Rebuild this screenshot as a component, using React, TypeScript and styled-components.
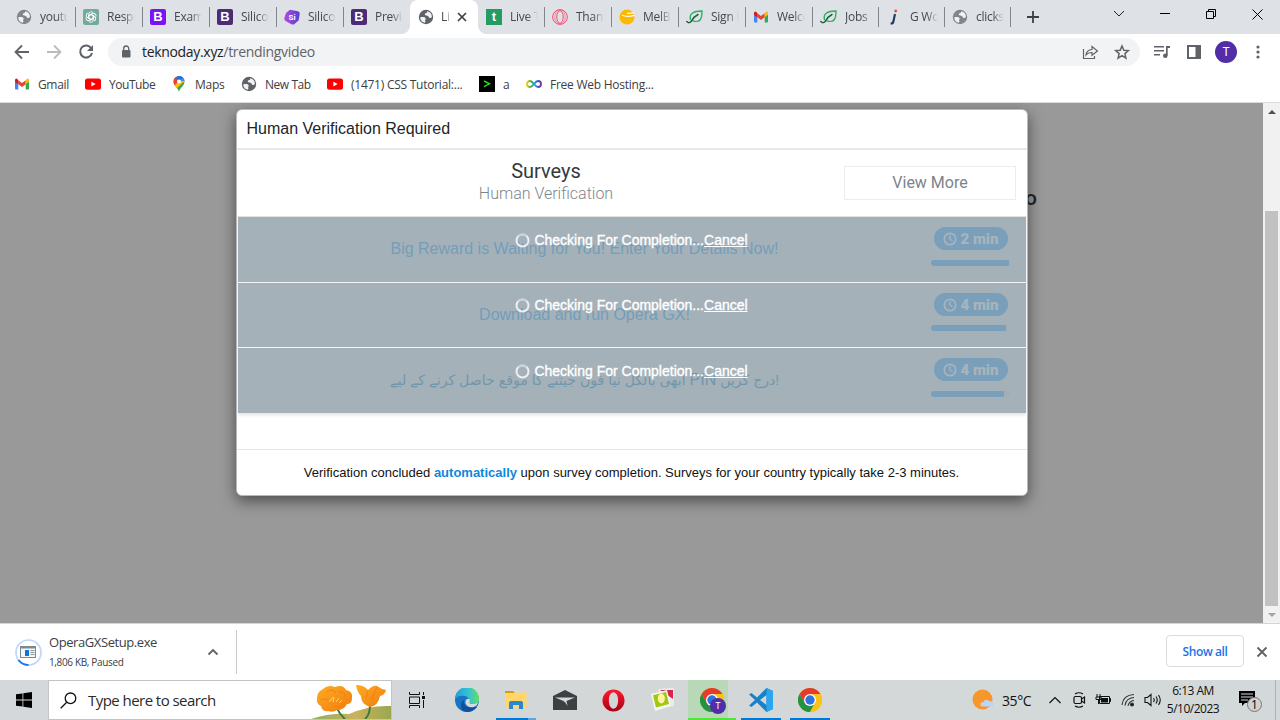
import React from "react";
import styled, { createGlobalStyle, css } from "styled-components";

const Global = createGlobalStyle`
  * { box-sizing: border-box; }
  html, body { margin: 0; padding: 0; overflow: hidden; }
  body { font-family: "Open Sans", "Noto Sans", sans-serif; font-size: 12px; color: #3c4043; }
  svg { display: block; flex: none; }
`;

const Screen = styled.div`
  width: 1280px;
  height: 720px;
  display: flex;
  flex-direction: column;
  background: #fff;
  overflow: hidden;
`;

/* ---------- tab strip ---------- */
const TabStrip = styled.div`
  height: 34px;
  flex: none;
  display: flex;
  background: #dee1e6;
  padding-left: 8px;
`;
const Tab = styled.div<{ $w: number; $active?: boolean; $line?: boolean }>`
  width: ${(p) => p.$w}px;
  flex: none;
  height: 34px;
  display: flex;
  align-items: center;
  padding-left: 8px;
  gap: 8px;
  position: relative;
  ${(p) =>
    p.$line &&
    css`
      &::after {
        content: "";
        position: absolute;
        right: -1px;
        top: 7px;
        width: 1px;
        height: 20px;
        background: #80868b;
      }
    `}
  ${(p) =>
    p.$active &&
    css`
      background: #fff;
      border-radius: 8px 8px 0 0;
      z-index: 1;
      gap: 7px;
      &::before,
      &::after {
        content: "";
        position: absolute;
        bottom: 0;
        width: 8px;
        height: 8px;
      }
      &::before {
        left: -8px;
        background: radial-gradient(circle at 0 0, transparent 7.5px, #fff 8px);
      }
      &::after {
        right: -8px;
        background: radial-gradient(circle at 100% 0, transparent 7.5px, #fff 8px);
      }
    `}
`;
const TabTitle = styled.span<{ $w?: number }>`
  width: ${(p) => p.$w ?? 28}px;
  overflow: hidden;
  white-space: nowrap;
  font-size: 12px;
  letter-spacing: -0.25px;
  line-height: 18px;
  color: #45494d;
  mask-image: linear-gradient(to right, #000 60%, transparent 100%);
`;
const WindowButtons = styled.div`
  flex: 1;
  height: 28px;
  display: flex;
  justify-content: flex-end;
  color: #111;
`;
const WindowButton = styled.div`
  width: 46px;
  display: flex;
  align-items: center;
  justify-content: center;
`;
const NewTab = styled.div`
  width: 46px;
  height: 34px;
  display: flex;
  align-items: center;
  justify-content: center;
`;

/* ---------- toolbar ---------- */
const Toolbar = styled.div`
  height: 36px;
  flex: none;
  display: flex;
  align-items: center;
  padding-left: 12px;
`;
const NavButtons = styled.div`
  width: 96px;
  flex: none;
  display: flex;
  align-items: center;
  gap: 12px;
`;
const Omnibox = styled.div`
  width: 1032px;
  flex: none;
  height: 28px;
  border-radius: 14px;
  background: #f1f3f4;
  display: flex;
  align-items: center;
  padding: 0 8px 0 10px;
  gap: 8px;
`;
const Url = styled.span`
  flex: 1;
  font-size: 14px;
  letter-spacing: -0.32px;
  color: #5f6368;
  line-height: 20px;
  b { font-weight: 400; color: #202124; }
`;
const OmniActions = styled.div`
  display: flex;
  gap: 12px;
`;
const ToolActions = styled.div`
  display: flex;
  align-items: center;
  padding-left: 12px;
`;
const Slot = styled.div<{ $w: number }>`
  width: ${(p) => p.$w}px;
  flex: none;
  display: flex;
  justify-content: center;
`;
const Avatar = styled.div<{ $size: number }>`
  width: ${(p) => p.$size}px;
  height: ${(p) => p.$size}px;
  flex: none;
  border-radius: 50%;
  background: #512da8;
  color: #fff;
  font-family: Roboto, sans-serif;
  font-size: ${(p) => Math.round(p.$size * 0.56)}px;
  display: flex;
  align-items: center;
  justify-content: center;
`;
const Bookmarks = styled.div`
  height: 33px;
  flex: none;
  display: flex;
  align-items: flex-start;
  padding: 4px 0 0 14px;
  border-bottom: 1px solid #dadce0;
`;
const Bookmark = styled.div<{ $w: number; $ls?: number }>`
  width: ${(p) => p.$w}px;
  height: 20px;
  flex: none;
  display: flex;
  align-items: center;
  gap: 8px;
  white-space: nowrap;
  letter-spacing: ${(p) => p.$ls ?? -0.25}px;
`;

/* ---------- page ---------- */
const Viewport = styled.div`
  height: 521px;
  flex: none;
  display: flex;
  border-bottom: 1px solid #d5d5d5;
`;
const Page = styled.div`
  width: 1263px;
  background: #999;
  padding: 6px 0 0 236px;
  position: relative;
  overflow: hidden;
`;
const HeadingBehind = styled.div`
  position: absolute;
  left: 1025px;
  top: 80px;
  font: 500 21px/30px Roboto, sans-serif;
  color: #212529;
`;
const Modal = styled.div`
  position: relative;
  width: 792px;
  height: 387px;
  border: 1px solid #b9b9b9;
  border-radius: 6px;
  background: #fff;
  box-shadow: 0 5px 15px rgba(0, 0, 0, 0.5);
  display: flex;
  flex-direction: column;
  overflow: hidden;
`;
const ModalTitle = styled.div`
  height: 40px;
  flex: none;
  padding: 0 9.5px;
  font: 16px/38px "Liberation Sans", Arial, sans-serif;
  color: #212529;
  border-bottom: 2px solid #e9e9e9;
`;
const SurveyHead = styled.div`
  height: 67px;
  flex: none;
  display: flex;
  padding: 10px 10px 0 11px;
  border-bottom: 1px solid #e4e4e4;
  font-family: Roboto, sans-serif;
`;
const HeadText = styled.div`
  width: 596px;
  text-align: center;
`;
const Surveys = styled.div`
  font-size: 20px;
  line-height: 23px;
  color: #343a40;
`;
const Sub = styled.div`
  font-size: 16px;
  font-weight: 300;
  line-height: 21px;
  color: #7d868e;
`;
const ViewMore = styled.div`
  width: 172px;
  height: 34px;
  margin-top: 6px;
  border: 1px solid #ececec;
  text-align: center;
  font-size: 16px;
  line-height: 32px;
  color: #7c848b;
`;
const Rows = styled.div`
  margin: 0 1px;
  height: 196px;
  flex: none;
  box-shadow: 0 2px 4px rgba(0, 0, 0, 0.12);
`;
const Row = styled.div<{ $h: number }>`
  height: ${(p) => p.$h}px;
  display: flex;
  position: relative;
  background: #a5b1b9;
  border-bottom: 1px solid #f2f4f5;
  &:last-child { border-bottom: 0; }
`;
const Offer = styled.div`
  width: 693px;
  text-align: center;
  font: 16px/64px "Liberation Sans", Arial, sans-serif;
  color: #729eb9;
  white-space: nowrap;
`;
const OfferUrdu = styled(Offer)`
  color: #7197ab;
  font-family: "Liberation Sans", "DejaVu Sans", sans-serif;
  font-size: 14.1px;
`;
const Latin = styled.span`
  font-size: 16px;
`;
const Side = styled.div`
  width: 79px;
  padding-top: 10px;
  display: flex;
  flex-direction: column;
  align-items: center;
`;
const Pill = styled.div`
  width: 74px;
  height: 23px;
  flex: none;
  border-radius: 12px;
  background: #7a9fbb;
  display: flex;
  align-items: center;
  justify-content: center;
  gap: 4px;
  font: 900 15px/22px Roboto, sans-serif;
  color: #a8b4bc;
`;
const Track = styled.div<{ $top: number }>`
  width: 79px;
  height: 6px;
  flex: none;
  margin-top: ${(p) => p.$top}px;
  border-radius: 3px;
  background: #a2adb5;
  overflow: hidden;
`;
const Fill = styled.div<{ $w: number }>`
  width: ${(p) => p.$w}px;
  height: 6px;
  background: #7a9fbb;
`;
const Checking = styled.div<{ $top: number }>`
  position: absolute;
  inset: ${(p) => p.$top}px 1px auto 0;
  display: flex;
  justify-content: center;
  align-items: center;
  gap: 4px;
  font: 14px/18px "Liberation Sans", Arial, sans-serif;
  color: #fff;
  -webkit-text-stroke: 0.35px #fff;
  u { text-underline-offset: 1px; }
`;
const Footer = styled.div`
  height: 46px;
  margin-top: auto;
  border-top: 1px solid #e5e5e5;
  padding-right: 1px;
  text-align: center;
  font: 13px/45px "Liberation Sans", Arial, sans-serif;
  color: #111;
  white-space: nowrap;
  b { color: #0f87dc; }
`;
const Scrollbar = styled.div`
  width: 17px;
  background: #f1f1f1;
  display: flex;
  flex-direction: column;
  align-items: center;
`;
const ScrollArrow = styled.div`
  height: 17px;
  display: flex;
  align-items: center;
`;
const Thumb = styled.div`
  width: 13px;
  height: 395px;
  margin-top: 91px;
  background: #c1c1c1;
`;

/* ---------- downloads ---------- */
const Shelf = styled.div`
  height: 56px;
  flex: none;
  display: flex;
  align-items: center;
  padding: 0 12px 0 15px;
`;
const Download = styled.div`
  width: 222px;
  height: 44px;
  border-right: 1px solid #c8cacd;
  display: flex;
  align-items: center;
`;
const DownloadText = styled.div`
  width: 160px;
  flex: none;
  padding-left: 7px;
`;
const FileName = styled.div`
  font-size: 13px;
  line-height: 19px;
  letter-spacing: -0.42px;
`;
const FileState = styled.div`
  font-size: 10px;
  line-height: 20px;
  letter-spacing: -0.35px;
`;
const ShowAll = styled.div`
  width: 78px;
  height: 32px;
  margin: -2px 12px 0 auto;
  border: 1px solid #dadce0;
  border-radius: 4px;
  text-align: center;
  line-height: 31px;
  font-weight: 600;
  letter-spacing: -0.4px;
  color: #1a73e8;
`;

/* ---------- taskbar ---------- */
const Taskbar = styled.div`
  height: 40px;
  flex: none;
  display: flex;
  background: linear-gradient(to right, #d5d8db, #d4d7d8 50%, #d3d9da);
  color: #111;
`;
const Start = styled.div`
  width: 48px;
  display: flex;
  align-items: center;
  justify-content: center;
`;
const Search = styled.div`
  width: 344px;
  height: 40px;
  border: 1px solid #c4c4c4;
  background: #fff;
  display: flex;
  align-items: center;
  padding-left: 11px;
  gap: 11px;
  font-size: 15px;
  letter-spacing: -0.55px;
  color: #2a2a2a;
  svg:last-child { margin-left: auto; }
`;
const TaskButton = styled.div<{ $bar?: string; $w?: number; $open?: boolean }>`
  width: ${(p) => p.$w ?? 49}px;
  height: 40px;
  display: flex;
  align-items: center;
  justify-content: center;
  position: relative;
  ${(p) =>
    p.$open &&
    css`
      background: linear-gradient(to right, transparent 1px, #b9d8b8 1px, #b9d8b8 41px, transparent 41px);
    `}
  ${(p) =>
    p.$bar &&
    css`
      &::after {
        content: "";
        position: absolute;
        left: ${p.$open ? 1 : 5}px;
        right: ${p.$open ? 0 : 4}px;
        bottom: 0;
        height: 2px;
        background: ${p.$bar};
      }
    `}
`;
const Badge = styled.div`
  position: absolute;
  right: 10px;
  bottom: 6px;
`;
const Tray = styled.div`
  margin-left: auto;
  display: flex;
  align-items: center;
  height: 40px;
`;
const Temp = styled.span`
  width: 55px;
  flex: none;
  padding-left: 8px;
  font-size: 14px;
  letter-spacing: -0.4px;
`;
const Clock = styled.div`
  width: 68px;
  padding-left: 4px;
  text-align: center;
  line-height: 18px;
  letter-spacing: -0.5px;
  margin-top: -1px;
`;
const ShowDesktop = styled.div`
  width: 5px;
  height: 40px;
  border-left: 1px solid #aeb2b4;
`;

/* ---------- icons ---------- */
const Globe = ({ c = "#5f6368" }: { c?: string }) => (
  <svg width="16" height="16" viewBox="0 0 16 16">
    <circle cx="8" cy="8" r="7.200" fill={c} />
    <path d="M2.200 8.200c2.200-.3 4.800-.5 5.400 1 .5 1.200-.8 1.500-.4 2.500.3.900.1 1.700-.4 2.100A5.900 5.900 0 0 1 2.200 8.200zM9.300 2.200c-.4 1 .1 1.500-1 1.900-1.300.4-1.700.9-1.400 1.700.4 1 2.300.5 3.200 1.300.8.800.5 1.900 1.800 2 .8 0 1.500-.5 2-1.200A5.900 5.900 0 0 0 9.300 2.200z" fill="#f0f2f4" />
  </svg>
);
const GPT = () => (
  <svg width="16" height="16" viewBox="0 0 16 16">
    <rect width="16" height="16" rx="2" fill="#74aa9c" />
    <g fill="none" stroke="#fff" strokeWidth=".9">
      {[0, 60, 120, 180, 240, 300].map((a) => (
        <path key={a} transform={`rotate(${a} 8 8)`} d="M5.800 9.200V5.200A2.500 2.500 0 0 1 10.200 3.600M5.800 6.700L8 5.400l3.300 1.900" />
      ))}
    </g>
  </svg>
);
const LetterIcon = styled.div<{ $bg: string; $r?: number }>`
  width: 16px;
  height: 16px;
  flex: none;
  border-radius: ${(p) => p.$r ?? 2}px;
  background: ${(p) => p.$bg};
  color: #fff;
  font: 700 13px/16px "Liberation Sans", sans-serif;
  text-align: center;
`;
const Silicon = () => (
  <svg width="16" height="16" viewBox="0 0 16 16">
    <defs>
      <linearGradient id="si" x1="0" x2="1">
        <stop offset="0" stopColor="#b04be0" />
        <stop offset="1" stopColor="#5a3fd0" />
      </linearGradient>
    </defs>
    <path d="M6 .8l8 1.400q2 .5 1.700 2.500l-1 6.500-4.500 4q-1.300.7-2.700 0L1.500 12Q0 11 .3 9L2 4z" fill="url(#si)" />
    <text x="8" y="11" fontSize="8" fontWeight="700" fill="#fff" textAnchor="middle" fontFamily="Roboto">Si</text>
  </svg>
);
const Opera = ({ s = 16, pink }: { s?: number; pink?: boolean }) =>
  pink ? (
    <svg width={s} height={s} viewBox="0 0 16 16" fill="none" stroke="#fa4d76">
      <circle cx="8" cy="8" r="7.400" />
      <ellipse cx="8" cy="8" rx="3.200" ry="6.300" />
      <ellipse cx="8" cy="8" rx="5.200" ry="7" strokeWidth=".6" />
    </svg>
  ) : (
    <svg width={s} height={s} viewBox="0 0 24 24">
      <defs>
        <linearGradient id="op" x2="0" y2="1">
          <stop offset="0" stopColor="#ff1b2d" />
          <stop offset="1" stopColor="#a70014" />
        </linearGradient>
      </defs>
      <path fillRule="evenodd" fill="url(#op)" d="M12 .5a11.500 11.500 0 1 0 0 23 11.500 11.500 0 0 0 0-23zM12 3.500c3 0 4.800 3.800 4.800 8.500s-1.800 8.500-4.800 8.500-4.800-3.800-4.800-8.500S9 3.500 12 3.500z" />
    </svg>
  );
const Mel = () => (
  <svg width="16" height="16" viewBox="0 0 16 16">
    <circle cx="8" cy="8" r="7.500" fill="#ffb800" />
    <path d="M8 4.200q3 .6 7-.6M3 6.300q5 1.900 12.500.1" stroke="#fff" strokeWidth="1.200" fill="none" />
  </svg>
);
const Leaf = () => (
  <svg width="17" height="16" viewBox="0 0 17 16" fill="none" strokeLinecap="round">
    <path d="M4.500 10.500C3 5 7 2 16 2c-.2 3 .2 6-1.600 8.500-1.500 2.200-5 2.300-7.400 1.300" stroke="#2fae66" strokeWidth="1.400" />
    <path d="M.8 12.500q2.500 2.500 4.800-.5Q8 7.500 12 5.500" stroke="#17633a" strokeWidth="1.500" />
  </svg>
);
const Gmail = () => (
  <svg width="16" height="16" viewBox="0 0 16 16">
    <path d="M1 13V4l3.300 2.500V13.500H2q-1 0-1-1z" fill="#4285f4" />
    <path d="M15 13V4l-3.300 2.500V13.500H14q1 0 1-1z" fill="#34a853" />
    <path d="M4.300 4.200L8 7l3.700-2.800v4L8 11 4.300 8.200z" fill="#ea4335" />
    <path d="M1 4.200Q1 2.500 2.500 2.600L4.300 4v4.200L1 5.800z" fill="#c5221f" />
    <path d="M15 4.200q0-1.700-1.500-1.600L11.700 4v4.200L15 5.800z" fill="#fbbc04" />
  </svg>
);
const JIcon = () => (
  <svg width="16" height="16" viewBox="0 0 16 16">
    <circle cx="9.700" cy="2" r="1.400" fill="#e8483f" />
    <path d="M9 5L7.400 12.500Q7 14.800 4.600 14.500" stroke="#1d3a66" strokeWidth="2.100" fill="none" />
  </svg>
);
const YouTube = () => (
  <svg width="16" height="16" viewBox="0 0 16 16">
    <rect y="2.400" width="16" height="11.400" rx="2.500" fill="#f00" />
    <path d="M6.400 5.700v4.800l4.200-2.400z" fill="#fff" />
  </svg>
);
const MapPin = () => (
  <svg width="16" height="16" viewBox="0 0 16 16">
    <clipPath id="pin"><path d="M8 16C7.400 12 2.500 10 2.500 5.500a5.500 5.500 0 0 1 11 0C13.500 10 8.600 12 8 16z" /></clipPath>
    <g clipPath="url(#pin)">
      <rect width="16" height="16" fill="#34a853" />
      <path d="M0 10L12 0h4v3L4 14z" fill="#fbbc04" />
      <path d="M5 0h11v5L10 5z" fill="#4285f4" />
      <path d="M8 5l6-5H7L4 3z" fill="#1a73e8" />
      <path d="M0 0h3l5 5-5 5-3-2z" fill="#ea4335" />
    </g>
    <circle cx="8" cy="5.500" r="2" fill="#fff" />
  </svg>
);
const Loop = () => (
  <svg width="16" height="16" viewBox="0 0 16 16" fill="none" strokeWidth="1.900">
    <defs>
      <linearGradient id="inf">
        <stop offset="0" stopColor="#f0d000" />
        <stop offset=".3" stopColor="#35a853" />
        <stop offset=".55" stopColor="#2a9be0" />
        <stop offset=".8" stopColor="#3158c8" />
        <stop offset="1" stopColor="#8a2fa0" />
      </linearGradient>
    </defs>
    <path stroke="url(#inf)" d="M8 8C6.500 6 5.500 5 4 5a3 3 0 0 0 0 6c1.500 0 2.500-1 4-3s2.500-3 4-3a3 3 0 0 1 0 6c-1.500 0-2.500-1-4-3z" />
  </svg>
);
const Terminal = () => (
  <svg width="16" height="16" viewBox="0 0 16 16">
    <rect width="16" height="16" fill="#000" />
    <path d="M5 5l5.500 2.800L5 10.600" stroke="#1fe01f" strokeWidth="1.500" fill="none" />
  </svg>
);
const ChromeIcon = () => (
  <svg width="24" height="24" viewBox="0 0 24 24">
    <circle cx="12" cy="12" r="12" fill="#fbc116" />
    <path d="M1.600 6A12 12 0 0 0 12 24l5-9H6.800z" fill="#229342" />
    <path d="M12 6h10.400A12 12 0 0 1 12 24l5.200-9z" fill="#fbc116" />
    <path d="M1.600 6L6.800 15 12 12V6h10.400A12 12 0 0 0 1.600 6z" fill="#e33b2e" />
    <circle cx="12" cy="12" r="6" fill="#fff" />
    <circle cx="12" cy="12" r="4.700" fill="#2f73e0" />
  </svg>
);
const Flowers = () => (
  <svg width="80" height="38" viewBox="2 0 80 38">
    <defs>
      <linearGradient id="hill"><stop offset="0" stopColor="#8fae63" /><stop offset=".55" stopColor="#c9b25e" /><stop offset="1" stopColor="#9aa84f" /></linearGradient>
      <linearGradient id="petal" x2="1" y2="1"><stop offset="0" stopColor="#ffab24" /><stop offset="1" stopColor="#f07c0b" /></linearGradient>
    </defs>
    <path d="M2 38Q20 32 40 33 60 24 82 25V38z" fill="url(#hill)" />
    <path d="M28 27q3 7 8 11M61 24q0 10-5 14" stroke="#3e7b42" strokeWidth="2" fill="none" />
    <path d="M14 8Q19 3 26 6q8-3 11 3 7 1 6 8 0 6-5 6-3 6-10 6-4 3-9 1-6 1-7-5-5-2-4-8 0-6 6-9z" fill="url(#petal)" />
    <g fill="none" stroke="#e87508" strokeOpacity=".55">
      <path d="M17 11q7-4 10 1M29 11q7-1 7 5M11 19q5-3 10 2M25 25q6 3 11-3" />
      <path d="M58 9q-3 7 2 15M68 7q-6 6-7 17" />
    </g>
    <path d="M20 21l4-5M24 21l1-5M27 21l3-4M30 22l3-3" stroke="#ffd95f" fill="none" />
    <path d="M47 4q8 0 12 5 5-5 9-4 4 3 9 4-1 5-6 6-2 10-10 11-9-3-9-11-4-4-5-11z" fill="url(#petal)" />
    <path d="M59 9l-2 8M68 6l-6 13" stroke="#e56d05" strokeOpacity=".5" fill="none" />
  </svg>
);

const tabs: { icon: React.ReactNode; text: string; w: number; active?: boolean; line?: boolean }[] = [
  { icon: <Globe c="#80868b" />, text: "youtube", w: 67, line: true },
  { icon: <GPT />, text: "Respo", w: 67, line: true },
  { icon: <LetterIcon $bg="#7a12f8">B</LetterIcon>, text: "Exam", w: 67, line: true },
  { icon: <LetterIcon $bg="#4c2d73">B</LetterIcon>, text: "Silico", w: 67, line: true },
  { icon: <Silicon />, text: "Silico", w: 67, line: true },
  { icon: <LetterIcon $bg="#4c2d73">B</LetterIcon>, text: "Previe", w: 67 },
  { icon: <Globe />, text: "Li", w: 68, active: true },
  { icon: <LetterIcon $bg="#249b63" $r={0}>t</LetterIcon>, text: "Live T", w: 66, line: true },
  { icon: <Opera pink />, text: "Thank", w: 67, line: true },
  { icon: <Mel />, text: "MelB", w: 67, line: true },
  { icon: <Leaf />, text: "Sign U", w: 67, line: true },
  { icon: <Gmail />, text: "Welco", w: 67, line: true },
  { icon: <Leaf />, text: "Jobs", w: 66, line: true },
  { icon: <JIcon />, text: "G Wo", w: 66, line: true },
  { icon: <Globe c="#80868b" />, text: "clicks", w: 66, line: true },
];

const bookmarks: { icon: React.ReactNode; text: string; w: number; ls?: number }[] = [
  { icon: <Gmail />, text: "Gmail", w: 71, ls: -0.35 },
  { icon: <YouTube />, text: "YouTube", w: 86, ls: -0.45 },
  { icon: <MapPin />, text: "Maps", w: 70 },
  { icon: <Globe />, text: "New Tab", w: 86, ls: -0.45 },
  { icon: <YouTube />, text: "(1471) CSS Tutorial:...", w: 152 },
  { icon: <Terminal />, text: "a", w: 47 },
  { icon: <Loop />, text: "Free Web Hosting...", w: 150 },
];

const Spinner = () => (
  <svg width="15" height="15" viewBox="0 0 15 15" fill="none" strokeWidth="2">
    <circle cx="7.500" cy="7.500" r="6" stroke="#edf0f2" />
    <path d="M3.300 3.300a6 6 0 0 1 8.400 0" stroke="#c9d1d6" />
  </svg>
);
const ClockIcon = () => (
  <svg width="14" height="14" viewBox="0 0 14 14" fill="none" stroke="#a8b4bc" strokeWidth="1.700">
    <circle cx="7" cy="7" r="5.700" />
    <path d="M7 3.300V7l2.500 2" strokeWidth="1.400" />
  </svg>
);

const rows = [
  { id: "reward", text: "Big Reward is Waiting for You! Enter Your Details Now!", min: "2 min", fill: 78, h: 66, top: 10, check: 14 },
  { id: "opera", text: "Download and run Opera GX!", min: "4 min", fill: 75, h: 65, top: 9, check: 13 },
  {
    id: "pin",
    text: <>ابھی بالکل نیا فون جیتنے کا موقع حاصل کرنے کے لیے <Latin>PIN</Latin> درج کریں!</>,
    min: "4 min", fill: 73, h: 65, top: 10, check: 14, urdu: true,
  },
];

export default function App() {
  return (
    <Screen>
      <Global />
      <TabStrip>
        {tabs.map((t, i) => (
          <Tab key={i} $w={t.w} $active={t.active} $line={t.line}>
            {t.icon}
            <TabTitle $w={t.active ? 9 : 28}>{t.text}</TabTitle>
            {t.active && (
              <svg width="10" height="10" viewBox="0 0 10 10" stroke="#3c4043" strokeWidth="1.700"><path d="M1 1l8 8M9 1L1 9" /></svg>
            )}
          </Tab>
        ))}
        <NewTab>
          <svg width="12" height="12" viewBox="0 0 12 12" stroke="#3c4043" strokeWidth="1.800"><path d="M6 0v12M0 6h12" /></svg>
        </NewTab>
        <WindowButtons>
          <WindowButton><svg width="12" height="8" viewBox="0 0 12 8" fill="none" stroke="#222"><path d="M1 1l5 5 5-5" /></svg></WindowButton>
          <WindowButton><svg width="10" height="2"><rect width="10" height="1" fill="#000" /></svg></WindowButton>
          <WindowButton><svg width="10" height="10" viewBox="0 0 10 10" fill="none" stroke="#000"><path d="M.5 2.500h7v7h-7zM2.500 2.500v-2h7v7h-2" /></svg></WindowButton>
          <WindowButton><svg width="11" height="11" viewBox="0 0 11 11" stroke="#000"><path d="M.5.5l10 10M10.500.5l-10 10" /></svg></WindowButton>
        </WindowButtons>
      </TabStrip>

      <Toolbar>
        <NavButtons>
          <svg width="20" height="20" viewBox="0 0 20 20" fill="none" stroke="#5f6368" strokeWidth="1.800"><path d="M17 10H4M10 3.500L3.500 10l6.500 6.500" /></svg>
          <svg width="20" height="20" viewBox="0 0 20 20" fill="none" stroke="#b9bcbf" strokeWidth="1.800"><path d="M3 10h13M10 3.500l6.500 6.500-6.500 6.500" /></svg>
          <svg width="20" height="20" viewBox="0 0 20 20" fill="none" stroke="#5f6368" strokeWidth="2"><path d="M15.200 6.200A6 6 0 1 0 16 11" /><path d="M17 3v6h-6z" fill="#5f6368" stroke="none" /></svg>
        </NavButtons>
        <Omnibox>
          <svg width="16" height="16" viewBox="0 0 16 16"><rect x="4" y="6" width="8.500" height="7.500" rx="1" fill="#5f6368" /><path d="M5.700 6V4.500a2.500 2.500 0 0 1 5 0V6" fill="none" stroke="#5f6368" strokeWidth="1.300" /></svg>
          <Url><b>teknoday.xyz</b>/trendingvideo</Url>
          <OmniActions>
            <svg width="20" height="20" viewBox="0 0 20 20" fill="none" stroke="#5f6368" strokeWidth="1.200"><path d="M3.500 7v9.500h11V14M6 13q.5-5 6-5.500V4.500L17.500 9 12 13.300V10.500q-4 0-6 2.500z" /></svg>
            <svg width="20" height="20" viewBox="0 0 20 20" fill="none" stroke="#5f6368" strokeWidth="1.500"><path d="M10 4l1.800 4.200 4.500.4-3.400 3 1 4.500-3.900-2.400-3.900 2.400 1-4.500-3.400-3 4.500-.4z" /></svg>
          </OmniActions>
        </Omnibox>
        <ToolActions>
          <Slot $w={20}><svg width="18" height="16" viewBox="0 0 18 16" fill="#5f6368"><path d="M1 2h10v1.500H1zM1 6h10v1.500H1zM1 10h6v1.500H1zM13 2h4v2h-2.300v7.500H13z" /><circle cx="12.300" cy="11.700" r="2.300" /></svg></Slot>
          <Slot $w={44}><svg width="14" height="14" viewBox="0 0 14 14"><path fillRule="evenodd" d="M0 0h14v14H0zM2 2v10h6.500V2z" fill="#5f6368" /></svg></Slot>
          <Slot $w={20}><Avatar $size={22}>T</Avatar></Slot>
          <Slot $w={44}><svg width="4" height="14" viewBox="0 0 4 14" fill="#5f6368"><circle cx="2" cy="2" r="1.600" /><circle cx="2" cy="7" r="1.600" /><circle cx="2" cy="12" r="1.600" /></svg></Slot>
        </ToolActions>
      </Toolbar>

      <Bookmarks>
        {bookmarks.map((b) => (
          <Bookmark key={b.text} $w={b.w} $ls={b.ls}>{b.icon}<span>{b.text}</span></Bookmark>
        ))}
      </Bookmarks>

      <Viewport>
        <Page>
          <HeadingBehind>o</HeadingBehind>
          <Modal>
            <ModalTitle>Human Verification Required</ModalTitle>
            <SurveyHead>
              <HeadText>
                <Surveys>Surveys</Surveys>
                <Sub>Human Verification</Sub>
              </HeadText>
              <ViewMore>View More</ViewMore>
            </SurveyHead>
            <Rows>
              {rows.map((r) => {
                const Title = r.urdu ? OfferUrdu : Offer;
                return (
                  <Row key={r.id} $h={r.h}>
                    <Title>{r.text}</Title>
                    <Side>
                      <Pill><ClockIcon />{r.min}</Pill>
                      <Track $top={r.top}><Fill $w={r.fill} /></Track>
                    </Side>
                    <Checking $top={r.check}><Spinner /><span>Checking For Completion...<u>Cancel</u></span></Checking>
                  </Row>
                );
              })}
            </Rows>
            <Footer>Verification concluded <b>automatically</b> upon survey completion. Surveys for your country typically take 2-3 minutes.</Footer>
          </Modal>
        </Page>
        <Scrollbar>
          <ScrollArrow><svg width="8" height="4"><path d="M0 4L4 0l4 4z" fill="#505050" /></svg></ScrollArrow>
          <Thumb />
          <ScrollArrow><svg width="8" height="4"><path d="M0 0l4 4 4-4z" fill="#a3a3a3" /></svg></ScrollArrow>
        </Scrollbar>
      </Viewport>

      <Shelf>
        <Download>
          <svg width="27" height="27" viewBox="0 0 27 27" fill="none">
            <circle cx="13.500" cy="13.500" r="12.500" stroke="#c0d7fb" strokeWidth="1.700" />
            <path d="M13.500 26A12.500 12.500 0 0 1 3.500 21" stroke="#1a73e8" strokeWidth="1.900" />
            <rect x="5.500" y="7.500" width="15" height="11" fill="#f4f6f7" stroke="#7f898e" />
            <path d="M5 8.500h16" stroke="#7f898e" strokeWidth="2" />
            <rect x="10" y="11" width="4" height="6" fill="#0b78d7" />
            <path d="M15.500 11.500h4M15.500 13.500h4M15.500 15.500h4" stroke="#8c979c" />
          </svg>
          <DownloadText>
            <FileName>OperaGXSetup.exe</FileName>
            <FileState>1,806 KB, Paused</FileState>
          </DownloadText>
          <svg width="22" height="8" viewBox="0 0 22 8" fill="none" stroke="#5f6368" strokeWidth="1.800"><path d="M6.500 6.500L11 2l4.500 4.500" /></svg>
        </Download>
        <ShowAll>Show all</ShowAll>
        <svg width="12" height="12" viewBox="0 0 12 12" stroke="#5f6368" strokeWidth="1.900"><path d="M1.500 1.500l9 9M10.500 1.500l-9 9" /></svg>
      </Shelf>

      <Taskbar>
        <Start><svg width="16" height="16" viewBox="0 0 16 16"><path d="M0 2.300l6.500-.9v6.100H0zM7.300 1.300L16 0v7.500H7.300zM0 8.400h6.500v6.200L0 13.700zM7.300 8.400H16V16l-8.700-1.200z" /></svg></Start>
        <Search>
          <svg width="17" height="17" viewBox="0 0 17 17" fill="none" stroke="#111" strokeWidth="1.300"><circle cx="10.500" cy="6.300" r="5.300" /><path d="M6.700 10.200L.7 16.300" /></svg>
          <span>Type here to search</span>
          <Flowers />
        </Search>
        <TaskButton $w={50}><svg width="18" height="16" viewBox="0 0 18 16" fill="none" stroke="#111" strokeWidth="1"><path d="M1.500 0v2.500h10V0M1.500 16v-2.500h10V16M1.500 5v6.500h10V5zM15.500 0v3M15.500 8v8" /><rect x="14" y="4" width="3" height="3" fill="#111" stroke="none" /></svg></TaskButton>
        <TaskButton>
          <svg width="24" height="24" viewBox="0 0 24 24">
            <defs><linearGradient id="ea" x2="1"><stop offset="0" stopColor="#249bdc" /><stop offset=".55" stopColor="#33c4d2" /><stop offset="1" stopColor="#66dc62" /></linearGradient></defs>
            <circle cx="12" cy="12" r="12" fill="#1676c5" />
            <path d="M0 11A12 12 0 0 1 24 11q.3 5-5.500 5-4 0-4-1.500 1-1.500 0-3.500C12 6.500 3 6.500 0 11z" fill="url(#ea)" />
            <path d="M9 12q-2 9 13 7-4 5-10 5Q5 23 6 16q.5-3 3-4z" fill="#124f9c" />
            <path d="M14.500 11q1 2 0 3.500 0 2 5 1.500l3.500-1.500q-1 3.500-4.500 4.500-6 1-8-3.500Q10 10 14.500 11z" fill="#d5dce0" />
          </svg>
        </TaskButton>
        <TaskButton $bar="linear-gradient(to right,#0078d7 80%,#5aa5e2 80%)">
          <svg width="22" height="20" viewBox="0 0 22 20"><path d="M0 1h8l2 2H0z" fill="#dc9a0b" /><path d="M0 4h10l2-1.500h9.500V18H0z" fill="#ffd667" /><path d="M4 19v-6q0-2 2-2h10q2 0 2 2v6h-4v-4H8v4z" fill="#2a86d1" /></svg>
        </TaskButton>
        <TaskButton><svg width="24" height="20" viewBox="0 0 24 20"><path d="M0 6L12 0l12 6v14H0z" fill="#3d4043" /><path d="M2 7.500h20l-8.500 3.500 1 5q-2-4-4-5z" fill="#d4d8da" /></svg></TaskButton>
        <TaskButton><Opera s={23} /></TaskButton>
        <TaskButton>
          <svg width="24" height="24" viewBox="0 0 24 24"><path d="M7 1l16-1v18l-6 1z" fill="#e6edf0" /><path d="M9 2h13v9z" fill="#d8254c" /><path d="M0 6l16-4 4 16L4 23z" fill="#f4f7e8" /><path d="M2 7.300l13-3.200L18 16 5 19.500z" fill="#a2c517" /><ellipse cx="10.300" cy="10.500" rx="3.500" ry="5" fill="#fff6a0" /></svg>
        </TaskButton>
        <TaskButton $open $bar="#4fe63c">
          <ChromeIcon />
          <Badge><Avatar $size={16}>T</Avatar></Badge>
        </TaskButton>
        <TaskButton $bar="#0078d7">
          <svg width="24" height="24" viewBox="0 0 24 24"><path d="M17.500 0L24 3v18l-6.500 3L8 14.500 2.500 19 0 17.500 6 12 0 6.500 2.500 5 8 9.500zM17.500 7L11 12l6.500 5z" fillRule="evenodd" fill="#1781c9" /><path d="M17.500 0L24 3v18l-6.500 3z" fill="#2ba6ee" /></svg>
        </TaskButton>
        <TaskButton $bar="#0078d7"><ChromeIcon /></TaskButton>
        <Tray>
          <svg width="22" height="22" viewBox="0 0 22 22"><circle cx="10.500" cy="10.500" r="10" fill="#f6962b" /><path d="M10 17.500q-2-.5-1.500-3 1-2 3-1.500 2-4 5.500-1 3.500-.5 4.500 2.500.3 3-2 3z" fill="#b9d5fb" /></svg>
          <Temp>35°C</Temp>
          <svg width="12" height="8" viewBox="0 0 12 8" fill="none" stroke="#111" strokeWidth="1.200"><path d="M.5 7L6 1.500 11.500 7" /></svg>
          <Slot $w={36}><svg width="13" height="16" viewBox="0 0 13 16" fill="none" stroke="#111" strokeWidth="1.200"><rect x="1" y="4.500" width="7.500" height="7" rx="1.500" /><path d="M8.500 7l3-2v6l-3-2M2 2q4-2.500 8 0M2 14q4 2.500 8 0" /></svg></Slot>
          <Slot $w={12}><svg width="16" height="12" viewBox="0 0 16 12"><path d="M4.500 2.500h10v7h-10zM14.500 4.500h1v3h-1M2 0v3M5 0v3M1 3h5v2.500H1zM3.500 5v5" fill="none" stroke="#111" /><rect x="6" y="4" width="7" height="4.500" fill="#111" /></svg></Slot>
          <Slot $w={38}><svg width="14" height="14" viewBox="0 0 14 14" fill="none" stroke="#333" strokeWidth="1.100"><path d="M1 12Q2 2 13 1.500M4 12.500Q5 5 13 4.500M7 12.800Q8 8 13 7.500" /><circle cx="11" cy="11.500" r="1.500" fill="#111" /></svg></Slot>
          <Slot $w={10}><svg width="17" height="14" viewBox="0 0 17 14" fill="none" stroke="#111" strokeWidth="1.100"><path d="M1 4.500h2.500L7 1.500v11l-3.500-3H1zM9.500 5q1.500 2 0 4M12 3.500q2.500 3.500 0 7M14.500 2q3.500 5 0 10" /></svg></Slot>
          <Clock>6:13 AM<br />5/10/2023</Clock>
          <Slot $w={50}><svg width="28" height="24" viewBox="0 0 28 24"><path d="M3 3h16v12H9l-3 3v-3H3z" fill="#000" /><path d="M5 6h12M5 9h12M5 12h7" stroke="#d5d9da" /><circle cx="18.500" cy="16.500" r="7" fill="#cfd3d4" stroke="#777" /><text x="18.500" y="21" fontSize="12" textAnchor="middle" fontFamily="Open Sans">1</text></svg></Slot>
          <ShowDesktop />
        </Tray>
      </Taskbar>
    </Screen>
  );
}
